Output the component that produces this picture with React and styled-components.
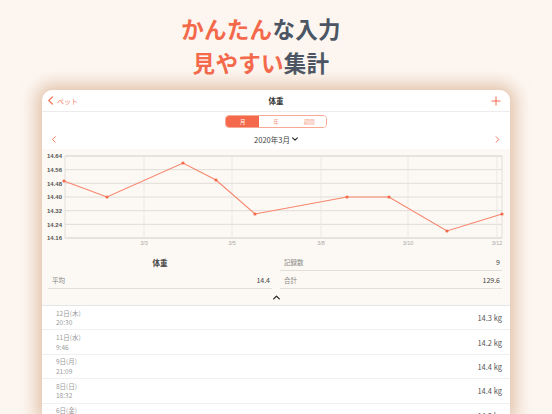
import React from "react"
import styled, { createGlobalStyle } from "styled-components"

const coral = "#f4694b"

const Global = createGlobalStyle`
  html, body {
    margin: 0;
    padding: 0;
    background: #fdf6f0;
    font-family: "Noto Sans CJK JP", "Noto Sans", sans-serif;
    overflow: hidden;
  }
`

const Page = styled.div`
  width: 552px;
  height: 414px;
  display: flex;
  flex-direction: column;
  align-items: center;
  overflow: hidden;
  background: #fdf6f0;
`

const Headline = styled.h1`
  margin: 11px 0 0;
  padding-right: 30px;
  font-size: 22.5px;
  line-height: 34px;
  font-weight: 700;
  text-align: center;
  color: #4b5563;
  letter-spacing: 0.3px;
`

const Hi = styled.span`
  color: ${coral};
`

const Frame = styled.div`
  margin-top: 11px;
  width: 468px;
  flex: 1;
  min-height: 0;
  background: #fff;
  border-radius: 10px 10px 0 0;
  box-shadow: 0 0 16px 6px rgba(208, 163, 128, 0.6);
  display: flex;
  flex-direction: column;
  overflow: hidden;
  font-size: 7px;
  color: #555;

  & > * {
    flex-shrink: 0;
  }
`

const NavBar = styled.div`
  height: 21px;
  display: flex;
  align-items: center;
  justify-content: space-between;
  padding: 0 9px 0 5px;
  border-bottom: 1px solid #ececec;
  position: relative;
`

const Back = styled.div`
  display: flex;
  align-items: center;
  gap: 1px;
  color: ${coral};
  font-size: 7px;
  opacity: 0.85;
`

const NavTitle = styled.div`
  position: absolute;
  left: 0;
  right: 0;
  text-align: center;
  font-weight: 700;
  font-size: 7.5px;
  color: #333;
  pointer-events: none;
`

const Plus = styled.div`
  color: ${coral};
  display: flex;
  align-items: center;
`

const SegRow = styled.div`
  display: flex;
  justify-content: center;
  padding-top: 3px;
`

const Segmented = styled.div`
  display: flex;
  width: 100px;
  height: 11px;
  border: 1px solid #f8a993;
  border-radius: 4px;
  overflow: hidden;
`

const Seg = styled.div`
  flex: 1;
  display: flex;
  align-items: center;
  justify-content: center;
  font-size: 5.5px;
  background: ${(p) => (p.$active ? coral : "#fff")};
  color: ${(p) => (p.$active ? "#fff" : "#f49a86")};
`

const DateRow = styled.div`
  height: 20px;
  display: flex;
  align-items: center;
  justify-content: space-between;
  padding: 1px 9px 0 9px;
`

const Month = styled.div`
  display: flex;
  align-items: center;
  gap: 2px;
  font-size: 7.5px;
  color: #444;
`

const ChartBox = styled.div`
  background: #fcf8f3;
  height: 102px;
`

const Stats = styled.div`
  background: #fcf8f3;
  display: grid;
  grid-template-columns: 224px 222px;
  column-gap: 8px;
  padding: 2px 8px 0 6px;
`

const StatTitle = styled.div`
  height: 18px;
  display: flex;
  align-items: center;
  justify-content: center;
  font-weight: 700;
  font-size: 7.5px;
  color: #444;
`

const StatRow = styled.div`
  height: 17px;
  display: flex;
  align-items: center;
  justify-content: space-between;
  padding: 0 2px 0 4px;
  border-bottom: 1px solid #e2dfdb;
  font-size: 6.5px;
  color: #888;
`

const StatValue = styled.span`
  color: #444;
  font-size: 7px;
`

const Caret = styled.div`
  background: #fcf8f3;
  height: 16px;
  display: flex;
  align-items: center;
  justify-content: center;
  border-bottom: 1px solid #e6e6e6;
`

const List = styled.div`
  display: flex;
  flex-direction: column;
`

const Row = styled.div`
  box-sizing: border-box;
  height: 24.4px;
  flex-shrink: 0;
  display: flex;
  align-items: center;
  justify-content: space-between;
  padding: 0 8px 0 14px;
  border-bottom: 1px solid #f0f0f0;
`

const When = styled.div`
  display: flex;
  flex-direction: column;
  gap: 1px;
  font-size: 6.5px;
  line-height: 8.5px;
  color: #9a9a9a;
`

const Weight = styled.div`
  font-size: 7.5px;
  color: #555;
`

const pts = [
  [22, 32], [65, 48], [141, 14], [174, 31], [213, 65],
  [305, 48], [347, 48], [405, 82], [460, 65],
]
const yLabels = ["14.64", "14.56", "14.48", "14.40", "14.32", "14.24", "14.16"]
const xGrid = [
  [102, "3/3"], [190, "3/5"], [279, "3/8"], [366, "3/10"], [455, "3/12"],
]

function Chart() {
  const top = 7
  const step = 13.67
  return (
    <svg width="468" height="102" viewBox="0 0 468 102">
      <rect x="23" y={top} width="437" height={step * 6} fill="none" stroke="#dddad6" strokeWidth="0.8" />
      {yLabels.map((l, i) => (
        <g key={l}>
          <line x1="23" x2="460" y1={top + i * step} y2={top + i * step} stroke="#d9d6d2" strokeWidth="0.8" />
          <text x="5" y={top + i * step + 2.2} fontSize="6" fontWeight="700" fill="#555" fontFamily="Liberation Sans, sans-serif">{l}</text>
        </g>
      ))}
      {xGrid.map(([x, l]) => (
        <g key={l}>
          <line x1={x} x2={x} y1={top} y2={top + step * 6} stroke="#e8e5e1" strokeWidth="0.8" />
          <text x={x} y="96" fontSize="5.5" textAnchor="middle" fill="#aaa" fontFamily="Liberation Sans, sans-serif">{l}</text>
        </g>
      ))}
      <polyline points={pts.map((p) => p.join(",")).join(" ")} fill="none" stroke="#f8846b" strokeWidth="1.1" />
      {pts.map(([x, y], i) => (
        <circle key={i} cx={x} cy={y} r="1.6" fill={coral} />
      ))}
    </svg>
  )
}

const Chevron = ({ dir = "left", size = 8, color = coral, sw = 1.3 }) => {
  const d = {
    left: "M6 1 L2 5 L6 9",
    right: "M3 1 L7 5 L3 9",
    down: "M1 3 L5 7 L9 3",
    up: "M1 7 L5 3 L9 7",
  }[dir]
  return (
    <svg width={size} height={size} viewBox="0 0 10 10">
      <path d={d} fill="none" stroke={color} strokeWidth={sw} strokeLinecap="round" strokeLinejoin="round" />
    </svg>
  )
}

const PlusIcon = () => (
  <svg width="10" height="10" viewBox="0 0 10 10">
    <path d="M5 0.5 V9.5 M0.5 5 H9.5" stroke={coral} strokeWidth="1" />
  </svg>
)

const records = [
  ["12日(木)", "20:30", "14.3 kg"],
  ["11日(水)", "9:46", "14.2 kg"],
  ["9日(月)", "21:09", "14.4 kg"],
  ["8日(日)", "18:32", "14.4 kg"],
  ["6日(金)", "8:10", "14.3 kg"],
]

export default function App() {
  return (
    <Page>
      <Global />
      <Headline>
        <Hi>かんたん</Hi>な入力
        <br />
        <Hi>見やすい</Hi>集計
      </Headline>
      <Frame>
        <NavBar>
          <Back>
            <Chevron dir="left" size={9} sw={1.6} />
            ペット
          </Back>
          <NavTitle>体重</NavTitle>
          <Plus>
            <PlusIcon />
          </Plus>
        </NavBar>
        <SegRow>
          <Segmented>
            <Seg $active>月</Seg>
            <Seg>年</Seg>
            <Seg>期間</Seg>
          </Segmented>
        </SegRow>
        <DateRow>
          <Chevron dir="left" size={7} />
          <Month>
            2020年3月
            <Chevron dir="down" size={6} color="#222" sw={1.8} />
          </Month>
          <Chevron dir="right" size={7} />
        </DateRow>
        <ChartBox>
          <Chart />
        </ChartBox>
        <Stats>
          <div>
            <StatTitle>体重</StatTitle>
            <StatRow>
              平均<StatValue>14.4</StatValue>
            </StatRow>
          </div>
          <div>
            <StatRow>
              記録数<StatValue>9</StatValue>
            </StatRow>
            <StatRow>
              合計<StatValue>129.6</StatValue>
            </StatRow>
          </div>
        </Stats>
        <Caret>
          <Chevron dir="up" size={7} color="#222" sw={1.8} />
        </Caret>
        <List>
          {records.map(([d, t, w]) => (
            <Row key={d}>
              <When>
                <span>{d}</span>
                <span>{t}</span>
              </When>
              <Weight>{w}</Weight>
            </Row>
          ))}
        </List>
      </Frame>
    </Page>
  )
}
